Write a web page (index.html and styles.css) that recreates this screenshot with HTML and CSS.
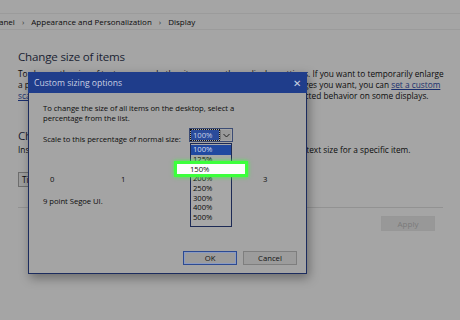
FILE: index.html
```html
<!DOCTYPE html>
<html lang="en">
<head>
  <meta charset="UTF-8" />
  <title>Display - Custom sizing options</title>
  <link rel="stylesheet" href="styles.css">
</head>
<body>
  <div class="screen">
    <div class="breadcrumb">
      <span>anel</span><span class="sep">›</span>
      <span>Appearance and Personalization</span><span class="sep">›</span>
      <span>Display</span>
    </div>

    <div class="page">
      <h1>Change size of items</h1>
      <div class="para">
        <div>To change the size of text, apps, and other items, use these display settings. If you want to temporarily enlarge</div>
        <div>a portion of your screen, use Magnifier. If neither of these makes the changes you want, you can <a href="#">set a custom</a></div>
        <div><a href="#">scaling level</a> (not recommended). Setting custom levels can lead to unexpected behavior on some displays.</div>
      </div>

      <h2>Change only the text size</h2>
      <div class="para">
        <div>Instead of changing the size of everything on the desktop, change only the text size for a specific item.</div>
      </div>

      <div class="controls">
        <div class="combo">Title bars</div>
        <div class="combo small">9</div>
      </div>

      <div class="divider"></div>
      <div class="actions">
        <button class="btn disabled">Apply</button>
      </div>
    </div>

    <div class="dialog">
      <div class="titlebar">
        <span>Custom sizing options</span>
        <span class="close">✕</span>
      </div>
      <div class="dialog-body">
        <div class="intro">
          <div>To change the size of all items on the desktop, select a</div>
          <div>percentage from the list.</div>
        </div>
        <div class="scale-row">
          <span class="label">Scale to this percentage of normal size:</span>
          <div class="select">
            <span class="value">100%</span>
            <span class="arrow">
              <svg width="7" height="5" viewBox="0 0 7 5"><path d="M0.5 1 L3.5 4 L6.5 1" fill="none" stroke="#222" stroke-width="1"/></svg>
            </span>
          </div>
        </div>
        <div class="ruler">
          <span>0</span><span>1</span><span>2</span><span>3</span>
        </div>
        <div class="sample">9 point Segoe UI.</div>
        <div class="buttons">
          <button class="btn default">OK</button>
          <button class="btn">Cancel</button>
        </div>

        <ul class="listbox">
          <li class="selected">100%</li>
          <li>125%</li>
          <li>150%</li>
          <li>200%</li>
          <li>250%</li>
          <li>300%</li>
          <li>400%</li>
          <li>500%</li>
        </ul>
        <div class="highlight">150%</div>
      </div>
    </div>
  </div>
</body>
</html>
```

FILE: styles.css
```css
* {
  box-sizing: border-box;
}

html, body {
  margin: 0;
  padding: 0;
  width: 460px;
  height: 320px;
  overflow: hidden;
  background: #a5a5a5;
  font-family: 'Open Sans', sans-serif;
  color: #0c0c0c;
}

.screen {
  position: relative;
  width: 460px;
  height: 320px;
  padding-top: 13px;
}

.breadcrumb {
  height: 17px;
  border-top: 1px solid #9b9b9b;
  border-bottom: 1px solid #9b9b9b;
  display: flex;
  align-items: center;
  gap: 6px;
  font-size: 8px;
  white-space: nowrap;
  margin-left: -1px;
}

.breadcrumb .sep {
  color: #333;
  padding: 0 1px;
}

.page {
  padding: 0 17px 0 18px;
}

h1, h2 {
  margin: 20px 0 4px;
  font-size: 11.6px;
  line-height: 14px;
  font-weight: 400;
  color: #1a1f33;
  letter-spacing: -0.2px;
}

h2 {
  margin: 28px 0 1px;
}

.para {
  font-size: 8.3px;
  line-height: 11px;
  white-space: nowrap;
}

.para a {
  color: #1a2f6e;
  text-decoration: underline;
}

.controls {
  display: flex;
  gap: 6px;
  margin-top: 17px;
}

.combo {
  height: 15px;
  width: 80px;
  border: 1px solid #6e6e6e;
  background: #9d9d9d;
  font-size: 8.3px;
  line-height: 13px;
  padding-left: 3px;
}

.combo.small {
  width: 30px;
}

.divider {
  margin-top: 20px;
  height: 1px;
  background: #929292;
}

.actions {
  display: flex;
  justify-content: flex-end;
  padding-right: 8px;
  margin-top: 8px;
}

.btn {
  font-family: 'Open Sans', sans-serif;
  font-size: 8px;
  height: 15px;
  width: 54px;
  padding: 0;
  border: 1px solid #7e7e7e;
  background: #9c9c9c;
  color: #111;
}

.btn.disabled {
  border-color: #979797;
  background: #989898;
  color: #7a7a7a;
}

.btn.default {
  border: 1px solid #2c4a92;
  box-shadow: inset 0 0 0 1px #8a9ac0;
}

/* dialog over the page */
.dialog {
  position: absolute;
  left: 28px;
  top: 72px;
  width: 279px;
  height: 202px;
  border: 1px solid #1c2c5e;
  background: #a4a4a4;
  box-shadow: 2px 4px 10px rgba(0, 0, 0, 0.35);
  display: flex;
  flex-direction: column;
}

.titlebar {
  height: 21px;
  background: #1f3d8b;
  color: #c9d0e2;
  font-size: 8.6px;
  display: flex;
  align-items: center;
  justify-content: space-between;
  padding: 0 6px 0 6px;
  margin: -1px -1px 0;
}

.titlebar .close {
  font-size: 10px;
  color: #c9d0e2;
}

.dialog-body {
  position: relative;
  flex: 1;
  display: flex;
  flex-direction: column;
  padding: 10px 9px 8px 14px;
  font-size: 7.7px;
  line-height: 10px;
  letter-spacing: -0.05px;
}

.scale-row {
  display: flex;
  align-items: flex-start;
  justify-content: space-between;
  width: 190px;
  margin-top: 5px;
  white-space: nowrap;
}

.scale-row .label {
  padding-top: 6px;
}

.select {
  display: flex;
  width: 44px;
  height: 14px;
  border: 1px solid #3c4c74;
  background: #a6a6a6;
  padding: 1px;
}

.select .value {
  background: #2a4b9b;
  color: #c6d0e6;
  font-size: 7.7px;
  line-height: 10px;
  padding: 0 2px;
  width: 28px;
  outline: 1px dotted #111;
}

.select .arrow {
  margin-left: auto;
  width: 11px;
  display: flex;
  align-items: center;
  justify-content: center;
  border-left: 1px solid #7a7a7a;
  background: #9a9a9a;
}

.ruler {
  display: flex;
  margin-top: 30px;
  padding-left: 7px;
}

.ruler span {
  flex: none;
  width: 71px;
}

.sample {
  margin-top: 12px;
}

.buttons {
  margin-top: auto;
  display: flex;
  justify-content: flex-end;
  gap: 6px;
}

.buttons .btn {
  width: 54px;
  height: 14px;
  font-size: 7.7px;
}

/* open drop-down list */
.listbox {
  position: absolute;
  left: 161px;
  top: 50px;
  width: 42px;
  margin: 0;
  padding: 1px 0 3px;
  list-style: none;
  border: 1px solid #1d2a55;
  background: #a7a7a7;
  font-size: 7.7px;
  line-height: 9.7px;
}

.listbox li {
  padding-left: 2px;
}

.listbox li.selected {
  background: #2149a0;
  color: #d4dcee;
}

.highlight {
  position: absolute;
  left: 145px;
  top: 68px;
  width: 74px;
  height: 16px;
  border: 3px solid #3cff3c;
  box-shadow: 0 0 4px #3cff3c;
  background: #fdfdfd;
  font-size: 7.7px;
  line-height: 10px;
  padding-left: 13px;
}
```
